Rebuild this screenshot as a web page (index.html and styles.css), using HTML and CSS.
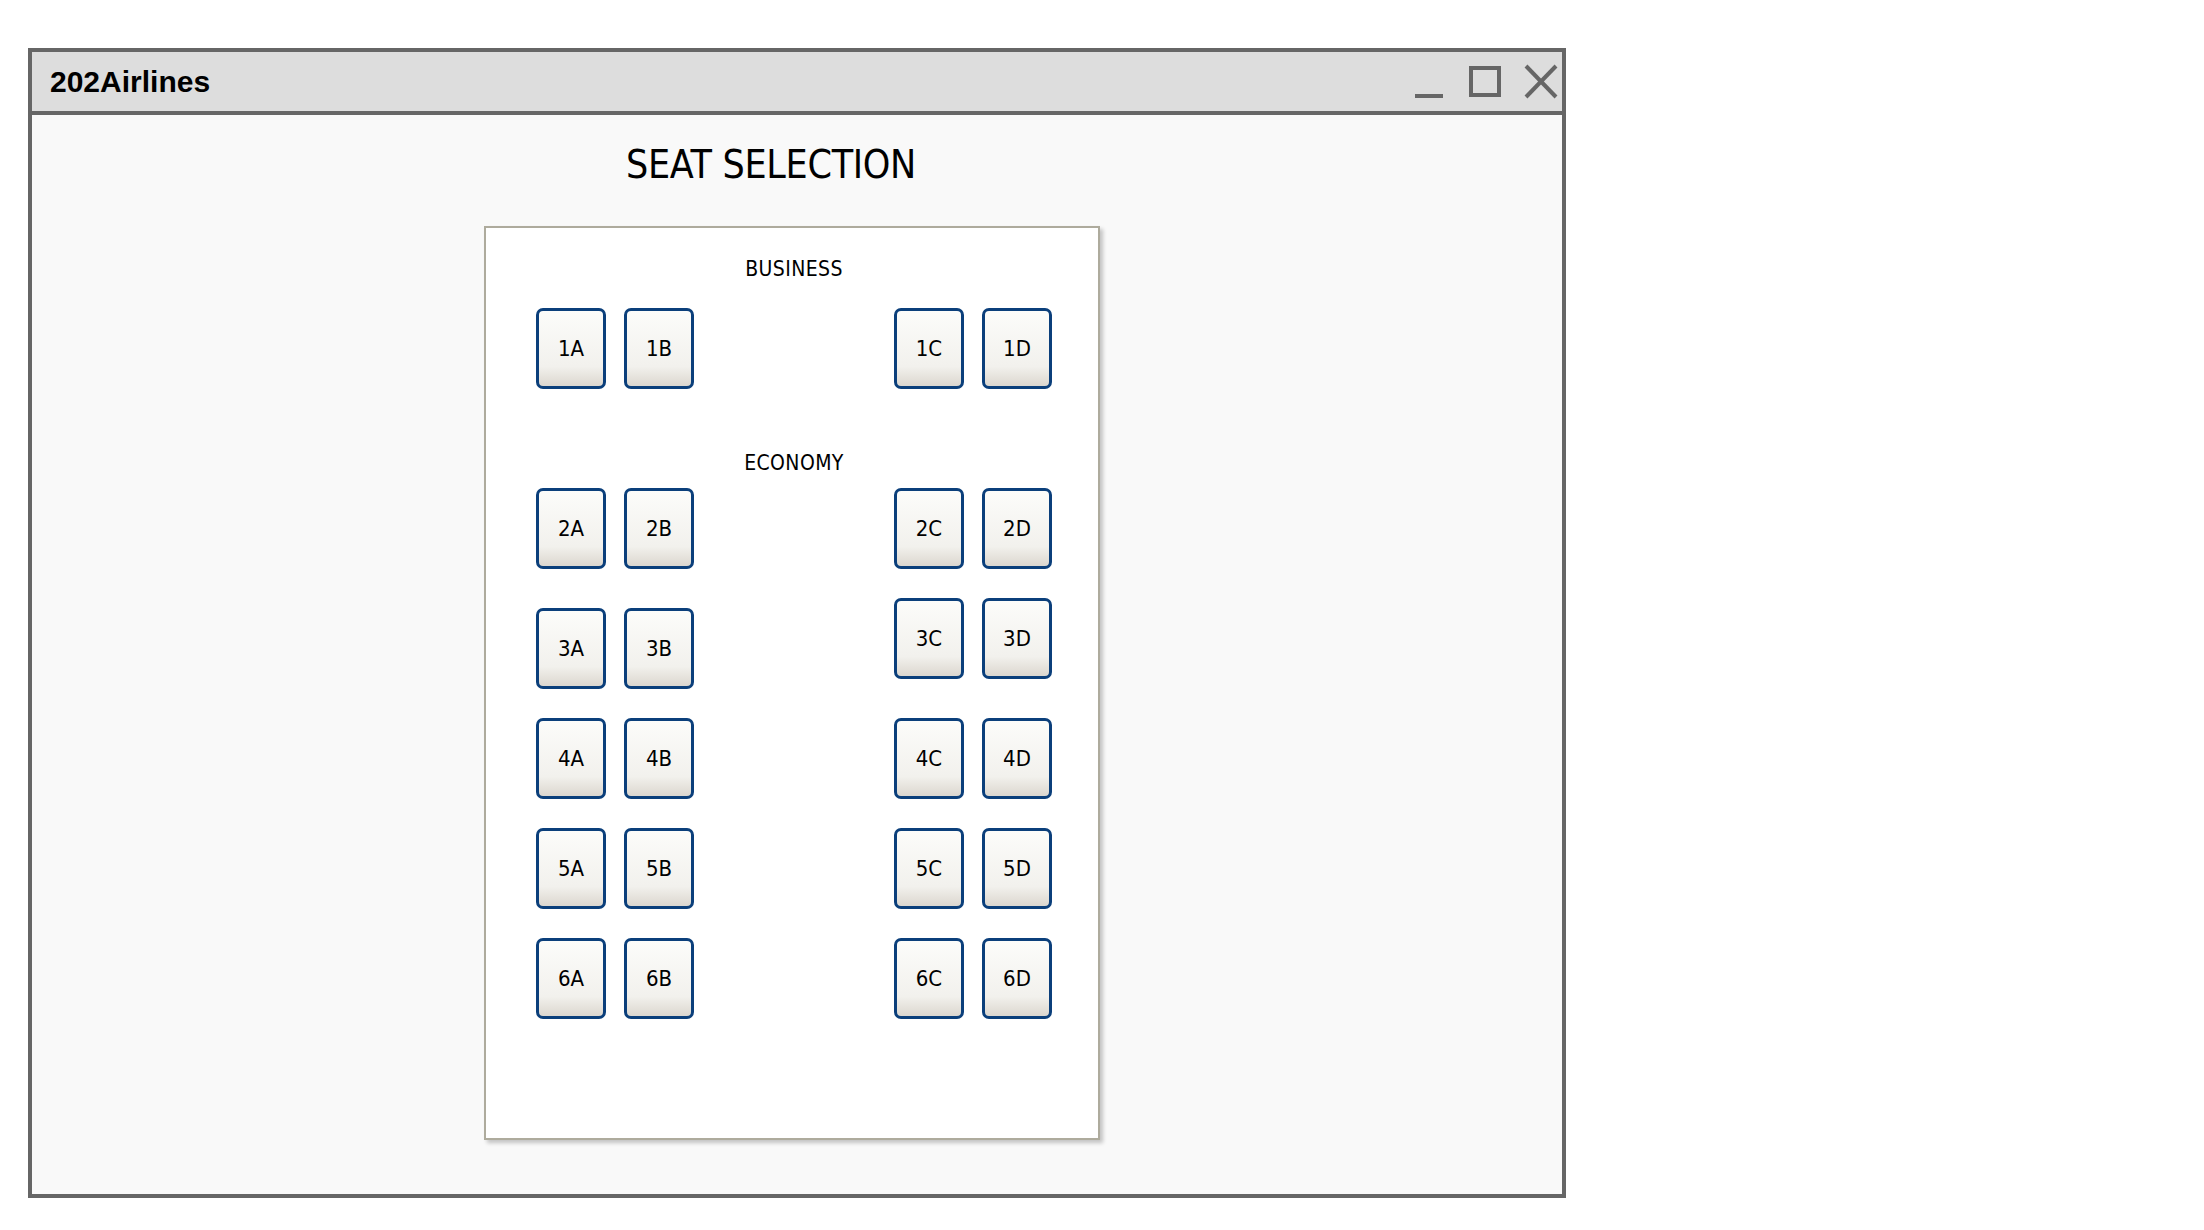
FILE: index.html
```html
<!DOCTYPE html>
<html lang="en">
<head>
<meta charset="utf-8">
<title>202Airlines - Seat Selection</title>
<link rel="stylesheet" href="styles.css">
</head>
<body>
<div class="window">
  <div class="titlebar">
    <span class="app-name">202Airlines</span>
    <svg class="controls" width="152" height="59" viewBox="0 0 152 59" aria-hidden="true">
      <rect x="5" y="42" width="28" height="4" fill="#666"/>
      <rect x="61" y="16" width="28" height="27" fill="none" stroke="#666" stroke-width="4"/>
      <line x1="116" y1="14" x2="146" y2="45" stroke="#666" stroke-width="4"/>
      <line x1="146" y1="14" x2="116" y2="45" stroke="#666" stroke-width="4"/>
    </svg>
  </div>
  <div class="content">
    <h1 class="page-title">SEAT SELECTION</h1>
    <div class="cabin">
      <div class="seatmap">
        <div class="section-label">BUSINESS</div>
        <div class="row row-first">
          <div class="pair"><div class="seat">1A</div><div class="seat">1B</div></div>
          <div class="pair"><div class="seat">1C</div><div class="seat">1D</div></div>
        </div>
        <div class="section-label section-economy">ECONOMY</div>
        <div class="row row-first-eco">
          <div class="pair"><div class="seat">2A</div><div class="seat">2B</div></div>
          <div class="pair"><div class="seat">2C</div><div class="seat">2D</div></div>
        </div>
        <div class="row">
          <div class="pair pair-lower"><div class="seat">3A</div><div class="seat">3B</div></div>
          <div class="pair"><div class="seat">3C</div><div class="seat">3D</div></div>
        </div>
        <div class="row">
          <div class="pair"><div class="seat">4A</div><div class="seat">4B</div></div>
          <div class="pair"><div class="seat">4C</div><div class="seat">4D</div></div>
        </div>
        <div class="row">
          <div class="pair"><div class="seat">5A</div><div class="seat">5B</div></div>
          <div class="pair"><div class="seat">5C</div><div class="seat">5D</div></div>
        </div>
        <div class="row">
          <div class="pair"><div class="seat">6A</div><div class="seat">6B</div></div>
          <div class="pair"><div class="seat">6C</div><div class="seat">6D</div></div>
        </div>
      </div>
    </div>
  </div>
</div>
</body>
</html>
```
FILE: styles.css
```css
html, body {
  margin: 0;
  padding: 0;
  background: #ffffff;
}

body {
  padding: 48px 0 0 28px;
}

.window {
  box-sizing: border-box;
  width: 1538px;
  height: 1150px;
  border: 4px solid #666666;
  background: #f9f9f9;
  display: flex;
  flex-direction: column;
}

.titlebar {
  height: 59px;
  background: #dddddd;
  border-bottom: 4px solid #666666;
  display: flex;
  align-items: center;
  justify-content: space-between;
  padding-left: 18px;
  flex: none;
}

.app-name {
  font-family: "Liberation Sans", Arial, sans-serif;
  font-weight: bold;
  font-size: 30px;
  color: #000;
}

.controls {
  display: block;
  flex: none;
}

.content {
  flex: 1;
  padding-top: 27px;
}

.page-title {
  margin: 0;
  padding-left: 594px;
  font-family: "DejaVu Sans Condensed", "DejaVu Sans", sans-serif;
  font-stretch: condensed;
  font-weight: normal;
  font-size: 39px;
  line-height: 46px;
  letter-spacing: -0.3px;
  color: #000;
}

.cabin {
  box-sizing: border-box;
  margin: 38px 0 0 452px;
  width: 616px;
  height: 914px;
  border: 2px solid #aeab9d;
  background: #ffffff;
  box-shadow: 3px 3px 4px rgba(0, 0, 0, 0.22);
  padding: 29px 0 0 50px;
}

.seatmap {
  width: 516px;
  display: flex;
  flex-direction: column;
}

.section-label {
  text-align: center;
  font-family: "DejaVu Sans Condensed", "DejaVu Sans", sans-serif;
  font-stretch: condensed;
  font-size: 21px;
  line-height: 25px;
  letter-spacing: 0.4px;
  color: #000;
}

.section-economy {
  margin-top: 62px;
}

.row {
  display: flex;
  justify-content: space-between;
  align-items: flex-start;
  margin-top: 29px;
}

.row-first {
  margin-top: 26px;
}

.row-first-eco {
  margin-top: 12px;
}

.pair {
  display: flex;
  gap: 18px;
}

.pair-lower {
  padding-top: 10px;
}

.seat {
  box-sizing: border-box;
  width: 70px;
  height: 81px;
  border: 3px solid #0b3f7b;
  border-radius: 7px;
  background: linear-gradient(to bottom, #fcfcfa 0%, #f2f1ed 74%, #dcd7cf 100%);
  display: flex;
  align-items: center;
  justify-content: center;
  font-family: "DejaVu Sans Condensed", "DejaVu Sans", sans-serif;
  font-stretch: condensed;
  font-size: 22px;
  color: #000;
}
```
